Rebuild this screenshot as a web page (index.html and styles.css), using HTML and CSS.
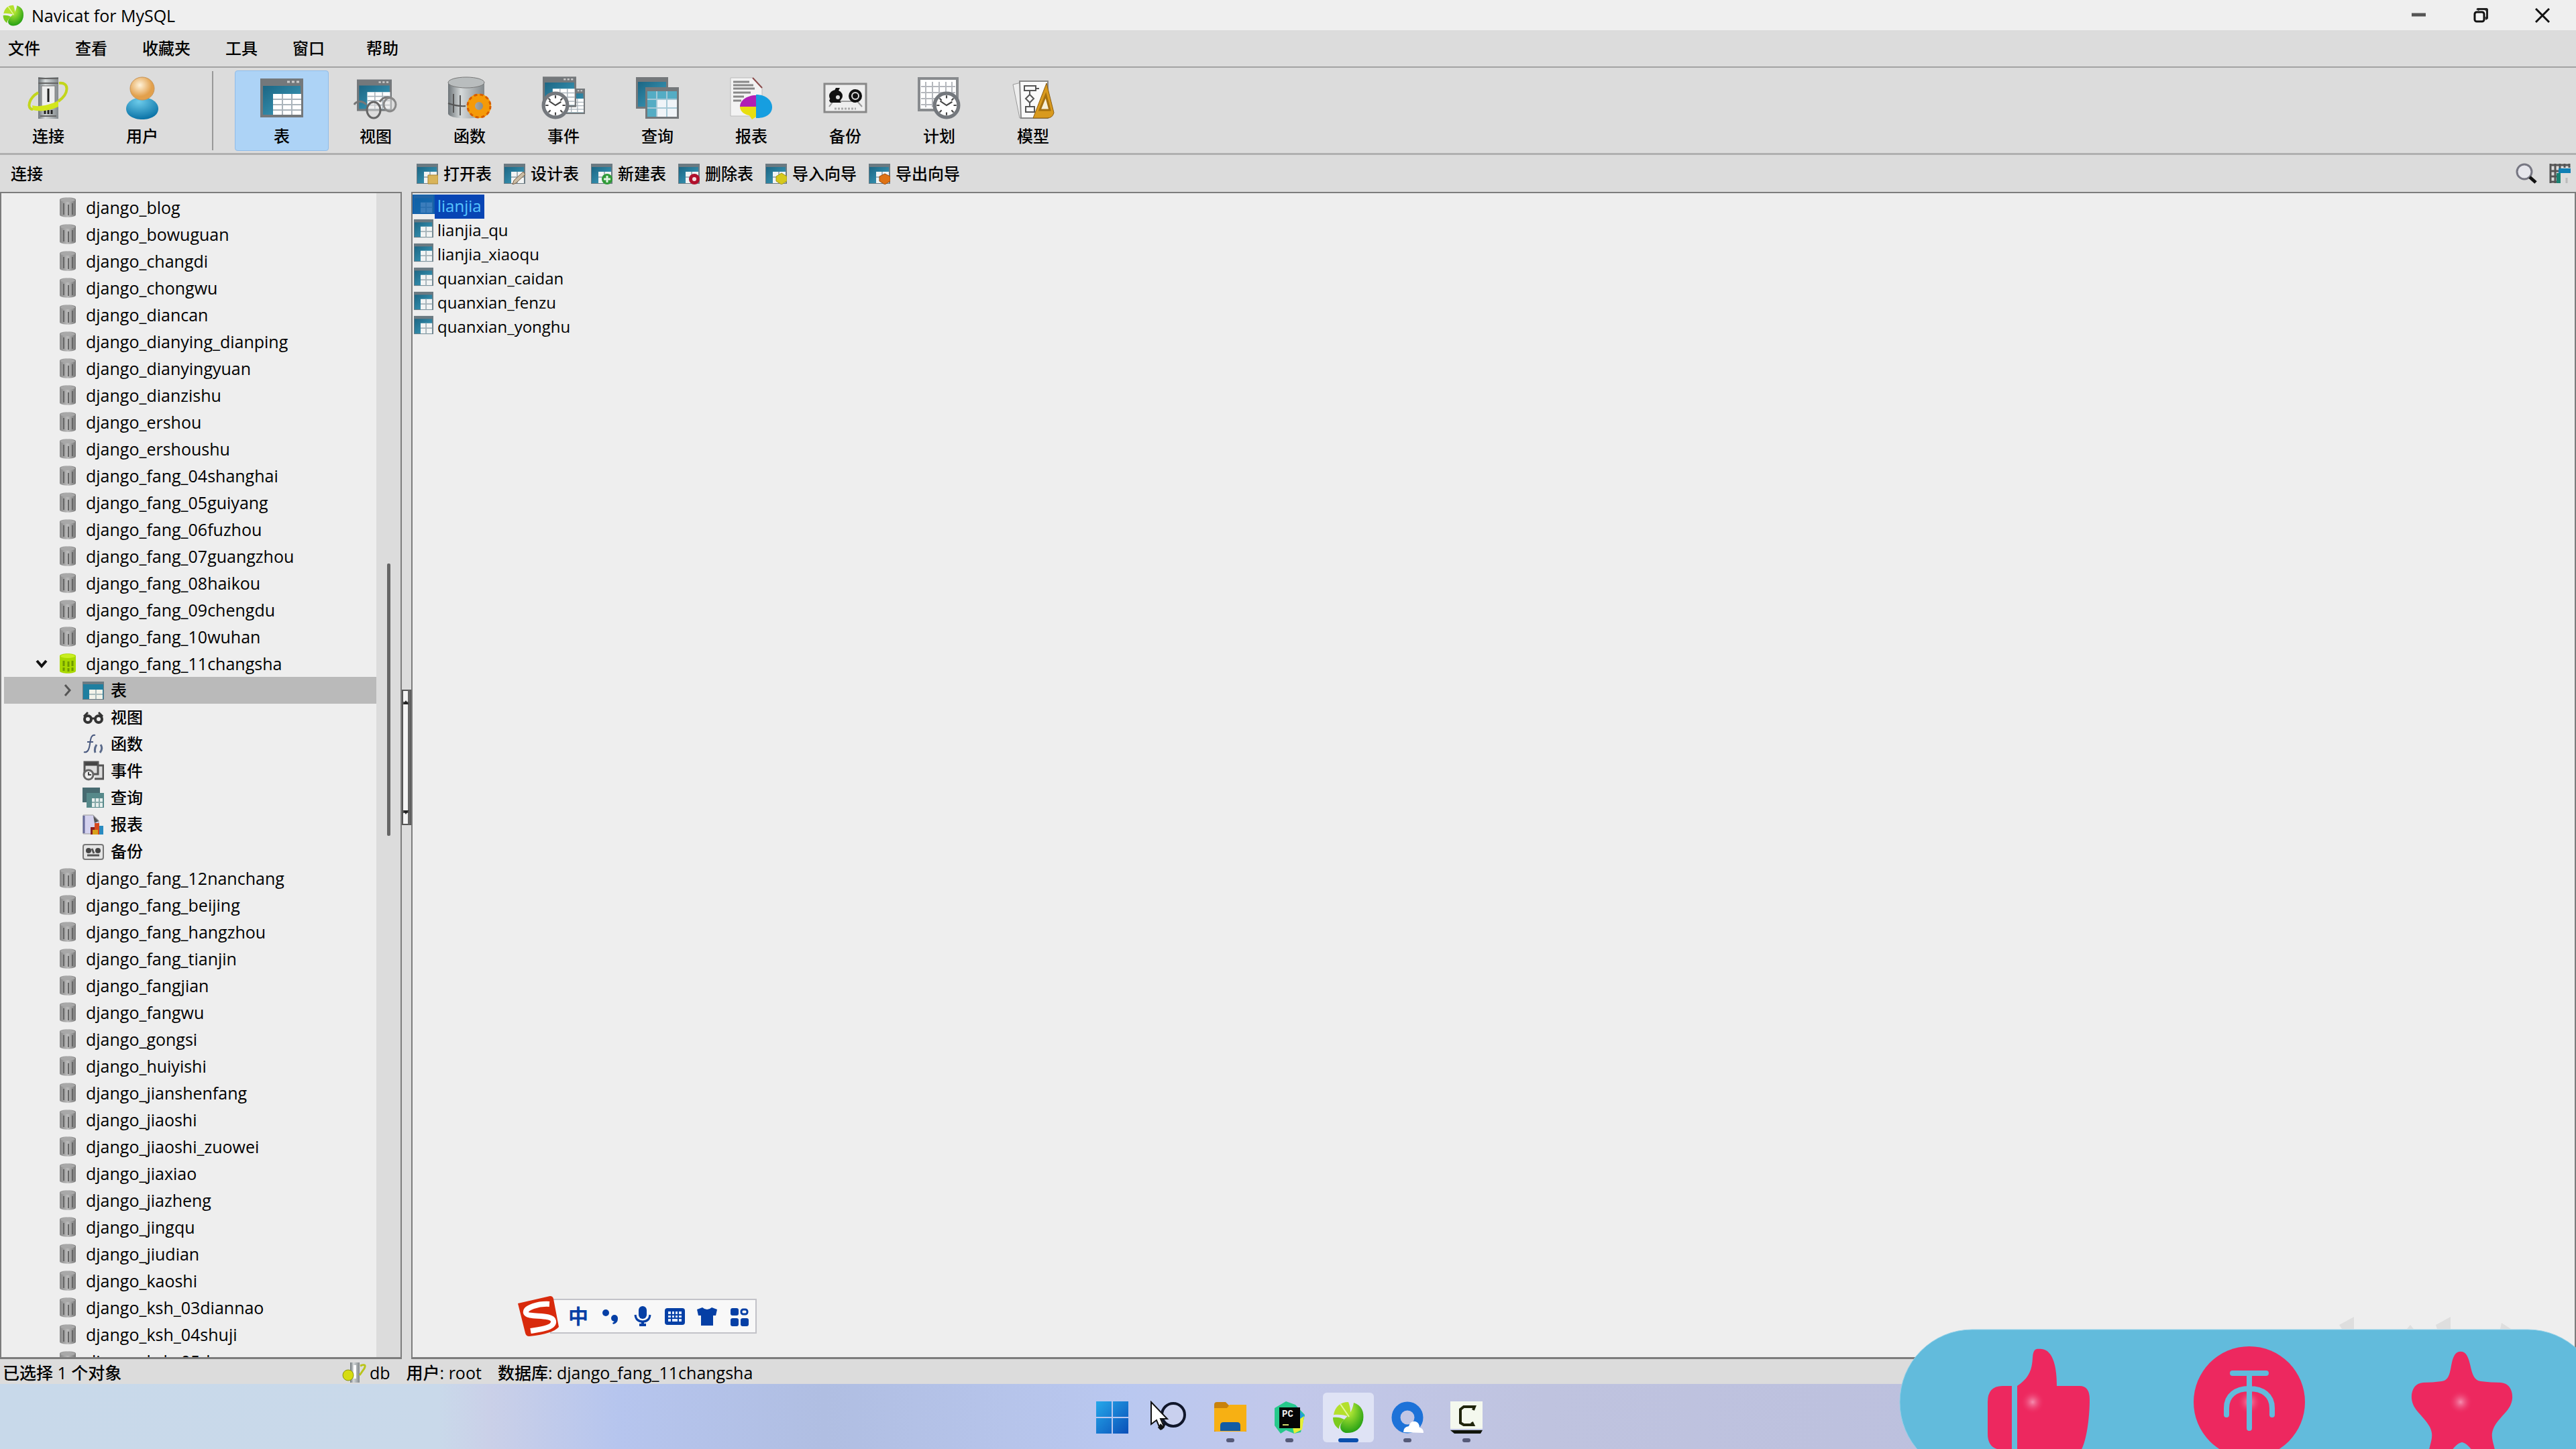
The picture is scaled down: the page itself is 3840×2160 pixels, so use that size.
FILE: index.html
```html
<!DOCTYPE html>
<html lang="zh-CN">
<head>
<meta charset="utf-8">
<title>Navicat for MySQL</title>
<link rel="stylesheet" href="styles.css">
</head>
<body>
<svg class="defs" aria-hidden="true">
  <defs>
    <linearGradient id="g-teal" x1="0" y1="0" x2="1" y2="1"><stop offset="0" stop-color="#1c6684"/><stop offset="1" stop-color="#3f9fbe"/></linearGradient>
    <linearGradient id="g-steel" x1="0" y1="0" x2="1" y2="0"><stop offset="0" stop-color="#6d7478"/><stop offset=".35" stop-color="#d5d9da"/><stop offset="1" stop-color="#83898c"/></linearGradient>
    <linearGradient id="g-gray" x1="0" y1="0" x2="1" y2="0"><stop offset="0" stop-color="#888"/><stop offset=".5" stop-color="#bbb"/><stop offset="1" stop-color="#777"/></linearGradient>
    <radialGradient id="g-skin" cx=".4" cy=".35"><stop offset="0" stop-color="#fff3da"/><stop offset="1" stop-color="#e2a04c"/></radialGradient>
    <radialGradient id="g-blue" cx=".4" cy=".2" r=".8"><stop offset="0" stop-color="#6ccbea"/><stop offset="1" stop-color="#0a72a6"/></radialGradient>
    <radialGradient id="g-green" cx=".35" cy=".25" r=".8"><stop offset="0" stop-color="#c8f23a"/><stop offset="1" stop-color="#1c9c12"/></radialGradient>
    <radialGradient id="g-shine"><stop offset="0" stop-color="#f48fb0"/><stop offset="1" stop-color="#ed285f" stop-opacity="0"/></radialGradient>
    <linearGradient id="g-win" x1="0" y1="0" x2="1" y2="1"><stop offset="0" stop-color="#25a8ea"/><stop offset="1" stop-color="#0a4fb8"/></linearGradient>
  </defs>
  <symbol id="i-leaf" viewBox="0 0 48 48"><path d="M2 20C4 8 12 1 24 1c3 8 4 14 2 22-8-3-16-4-24-3z" fill="#b4e02c"/><path d="M32 2c12 4 16 14 14 26-3 14-14 20-26 19-8-2-11-10-4-18 8-8 14-14 16-27z" fill="url(#g-green)"/><path d="M1 24c6-1 12 0 17 3-6 6-8 10-8 14-5-3-9-9-9-17z" fill="#7ccb1e"/><path d="M12 4l13 19" stroke="#e4f8a0" stroke-width="2"/></symbol>
  <symbol id="i-table" viewBox="0 0 64 64"><path fill="#74787b" d="M0 3h64v58H0z"/><path fill="url(#g-teal)" d="M4 14h56v43H4z"/><path fill="#fff" d="M19 26h42v31H19z"/><path d="M33 26v31M47 26v31M19 34h42M19 42h42M19 50h42" stroke="#aab4bb" stroke-width="2"/><path d="M40 8h4M47 8h4M54 8h4" stroke="#ccc" stroke-width="3"/></symbol>
  <symbol id="i-stable" viewBox="0 0 32 32"><path fill="#6b7a82" d="M0 1h32v30H0z"/><path fill="url(#g-teal)" d="M1 6h29v24H1z"/><path fill="#f2f4f4" d="M11 13h19v17H11z"/><path d="M20 13v17M11 21h19" stroke="#a4b2b8" stroke-width="2"/></symbol>
  <symbol id="i-db" viewBox="0 0 26 32"><path d="M1 5c0-5 24-5 24 0v22c0 5-24 5-24 0z" fill="url(#g-gray)"/><ellipse cx="13" cy="5" rx="11" ry="3" fill="#a8a8a8"/><path d="M7 10v17M14 12v16M20 10v17" stroke="#666" stroke-width="2"/></symbol>
  <symbol id="i-dbon" viewBox="0 0 26 32"><path d="M1 5c0-5 24-5 24 0v22c0 5-24 5-24 0z" fill="#a8d800"/><ellipse cx="13" cy="5" rx="11" ry="3" fill="#c9ee20"/><path d="M7 12v15M14 13v15M20 12v15" stroke="#6f9a00" stroke-width="3" stroke-dasharray="8 2"/></symbol>
  <symbol id="i-clock" viewBox="0 0 40 40"><circle cx="20" cy="20" r="17" fill="#fff" stroke="#74787d" stroke-width="5"/><path d="M20 6v4M20 30v4M6 20h4M30 20h4M10 10l3 3M30 10l-3 3M10 30l3-3M30 30l-3-3M11 14l9 6 8-5" fill="none" stroke="#444" stroke-width="2"/></symbol>
  <symbol id="i-chev" viewBox="0 0 24 24"><path d="M5 8l7 8 7-8" fill="none" stroke="#111" stroke-width="4"/></symbol>
</svg>

<header class="titlebar">
  <svg class="app-icon"><use href="#i-leaf"/></svg>
  <h1 class="app-title">Navicat for MySQL</h1>
  <button class="win-btn" aria-label="最小化"><svg viewBox="0 0 22 22"><path d="M0 10h21" stroke="#555" stroke-width="5"/></svg></button>
  <button class="win-btn" aria-label="还原"><svg viewBox="0 0 22 22"><rect x="2" y="6" width="14" height="14" rx="3" fill="#f4f4f4" stroke="#111" stroke-width="3"/><path d="M6 3q1-2 4-2h6q5 0 5 5v6q0 3-3 4" fill="none" stroke="#222" stroke-width="4"/></svg></button>
  <button class="win-btn" aria-label="关闭"><svg viewBox="0 0 22 22"><path d="M1 1l20 20M21 1L1 21" stroke="#111" stroke-width="3"/></svg></button>
</header>

<nav class="menubar">
  <button>文件</button><button>查看</button><button>收藏夹</button><button>工具</button><button>窗口</button><button class="menu-help">帮助</button>
</nav>

<div class="toolbar">
  <button class="tool"><svg viewBox="0 0 64 64"><path d="M17 1h30v62H17z" fill="url(#g-steel)"/><path d="M17 3h30M17 10h30M20 59h24" stroke="#666" stroke-width="2"/><path d="M22 14h20v32H22z" fill="#eee" stroke="#777"/><path d="M32 18v20M27 50v6M32 50v6M37 50v6" stroke="#222" stroke-width="3"/><path d="M48 10c16-2 15 16-1 27M17 24C3 32-1 48 9 49" fill="none" stroke="#c2d51c" stroke-width="4"/><path d="M8 43c8 3 26 0 39-7v9c-12 6-27 8-38 5z" fill="#d3e61c"/></svg><span>连接</span></button>
  <button class="tool"><svg viewBox="0 0 64 64"><path d="M8 48c0-9 10-17 24-17s24 8 24 17c0 10-11 16-24 16S8 58 8 48z" fill="url(#g-blue)"/><ellipse cx="32" cy="18" rx="18" ry="17" fill="url(#g-skin)" stroke="#c79457"/></svg><span>用户</span></button>
  <i class="sep"></i>
  <button class="tool tool-on"><svg><use href="#i-table"/></svg><span>表</span></button>
  <button class="tool"><svg viewBox="0 0 64 64"><use href="#i-table" x="4" y="2" width="52" height="52"/><path d="M18 42c-8-8-16-4-18 0M38 38c6-10 16-8 22-2" fill="none" stroke="#777" stroke-width="3"/><ellipse cx="29" cy="50" rx="10" ry="12" fill="#ddd" fill-opacity=".5" stroke="#666" stroke-width="3"/><ellipse cx="53" cy="42" rx="9" ry="10" fill="#ddd" fill-opacity=".5" stroke="#888" stroke-width="3"/></svg><span>视图</span></button>
  <button class="tool"><svg viewBox="0 0 64 64"><path d="M0 9v46c0 10 54 10 54 0V9z" fill="url(#g-steel)"/><ellipse cx="27" cy="9" rx="27" ry="8" fill="#b9bdbe" stroke="#777"/><path d="M8 26v28M18 28v30M0 40q14 5 26 4" fill="none" stroke="#555" stroke-width="2"/><circle cx="46" cy="44" r="12" fill="none" stroke="#f59a08" stroke-width="12"/><circle cx="46" cy="44" r="17" fill="none" stroke="#d55c00" stroke-width="3" stroke-dasharray="5 4"/></svg><span>函数</span></button>
  <button class="tool"><svg viewBox="0 0 64 64"><use href="#i-table" x="22" y="12" width="42" height="50"/><use href="#i-table" x="1" y="-2" width="50" height="50"/><use href="#i-clock" x="-1" y="22" width="42" height="42"/></svg><span>事件</span></button>
  <button class="tool"><svg viewBox="0 0 64 64"><path d="M0 1h48v47H0z" fill="#74787b"/><path d="M3 8h42v37H3z" fill="url(#g-teal)"/><path d="M14 16h50v47H14z" fill="#74787b"/><path d="M17 22h44v38H17z" fill="#54acc4"/><path d="M31 34h30v26H31z" fill="#f0f4f8"/><path d="M31 22v38M46 22v38M17 34h44M17 47h44" stroke="#a5c8d6" stroke-width="2"/></svg><span>查询</span></button>
  <button class="tool"><svg viewBox="0 0 64 64"><path d="M1 2h33l14 15v42H1z" fill="#f3f3f3" stroke="#bbb"/><path d="M34 2l14 15" stroke="#8a4a4a" stroke-width="2"/><path d="M5 8h24M5 13h30M5 18h32M5 24h26M5 30h16M5 36h12" stroke="#888" stroke-width="3"/><path d="M39 28v17H15c0-9 10-17 24-17z" fill="#b01fb5"/><path d="M39 62V27c30 0 34 36 0 35z" fill="#169ee0"/><path d="M39 45H15c0 8 8 12 14 13l4 6 6-4z" fill="#e8de10"/></svg><span>报表</span></button>
  <button class="tool"><svg viewBox="0 0 64 64"><path d="M1 11h62v42H1z" fill="#eee" stroke="#888" stroke-width="3"/><path d="M8 45l6-8h36l7 8" fill="none" stroke="#999" stroke-width="2"/><ellipse cx="18" cy="29" rx="10" ry="9" fill="#111"/><path d="M8 36l10-19h6l-6 12 8 10H10z" fill="#111"/><circle cx="47" cy="29" r="10" fill="#111"/><circle cx="47" cy="29" r="5" fill="none" stroke="#ddd" stroke-width="2"/><circle cx="21" cy="31" r="3" fill="#ddd"/><path d="M16 48h32" stroke="#aaa" stroke-width="3" stroke-dasharray="3 2"/></svg><span>备份</span></button>
  <button class="tool"><svg viewBox="0 0 64 64"><path d="M2 3h57v47H2z" fill="#fff" stroke="#888b8e" stroke-width="4"/><path d="M12 8v38M22 8v38M32 8v38M42 8v38M51 8v38M5 15h51M5 24h51M5 33h51M5 42h51" stroke="#b5b8bd" stroke-width="2"/><use href="#i-clock" x="22" y="22" width="42" height="42"/></svg><span>计划</span></button>
  <button class="tool"><svg viewBox="0 0 64 64"><path d="M2 12l16-4 6 52-12 2z" fill="#eee" stroke="#999"/><path d="M12 7h42v55H14z" fill="#fafafa" stroke="#888" stroke-width="2"/><path d="M19 14h17v7H19zM27 21v6M21 33l6-6 6 6-6 6zM27 39v6M21 45h13v8H21zM36 18h5" fill="none" stroke="#555" stroke-width="2"/><path d="M52 10l11 44q-2 8-10 8H32z" fill="#d99a1e" stroke="#8a5c12"/><path d="M51 28l6 22H42z" fill="#f7efd8" stroke="#a5700f" stroke-width="3"/></svg><span>模型</span></button>
</div>

<main class="workspace">
  <h2 class="pane-title">连接</h2>
  <div class="actions">
    <button class="action"><svg viewBox="0 0 32 32"><use href="#i-stable"/><path d="M17 18h15v13H17z" fill="#d9b45a" stroke="#a58332"/></svg>打开表</button>
    <button class="action"><svg viewBox="0 0 32 32"><use href="#i-stable"/><path d="M15 26l14-13 3 4-14 13-5 2z" fill="#c9bda6" stroke="#7a5c40"/></svg>设计表</button>
    <button class="action"><svg viewBox="0 0 32 32"><use href="#i-stable"/><circle cx="24" cy="24" r="8" fill="#2f9a38"/><path d="M24 19v10M19 24h10" stroke="#dff3df" stroke-width="3"/></svg>新建表</button>
    <button class="action"><svg viewBox="0 0 32 32"><use href="#i-stable"/><circle cx="24" cy="24" r="8" fill="#b0102c"/><circle cx="24" cy="24" r="3" fill="#f4dfe2"/></svg>删除表</button>
    <button class="action"><svg viewBox="0 0 32 32"><use href="#i-stable"/><path d="M16 20l8-5 8 5v7l-8 5-8-5z" fill="#d6c91c" stroke="#a0961a"/></svg>导入向导</button>
    <button class="action"><svg viewBox="0 0 32 32"><use href="#i-stable"/><path d="M16 20l8-4 8 4v7l-8 5-8-5z" fill="#de7214" stroke="#9c4a0a"/></svg>导出向导</button>
    <button class="tail tail-first" aria-label="搜索"><svg viewBox="0 0 32 32"><circle cx="13" cy="13" r="11" fill="#e6e6ec" stroke="#777783" stroke-width="3"/><path d="M21 21l9 8" stroke="#111" stroke-width="5"/></svg></button>
    <button class="tail" aria-label="视图方式"><svg viewBox="0 0 32 32"><path d="M2 1v29M9 1v29M16 1v10M23 1v6M30 1v6M1 3h30M1 12h14M1 20h14M1 28h14" stroke="#555" stroke-width="3"/><path d="M14 8h18v7H14z" fill="#0f7fb5"/><path d="M11 15h6v15h-6z" fill="#1a8272"/><path d="M26 22v8" stroke="#bbb" stroke-width="3"/></svg></button>
  </div>

  <aside class="tree-pane">
    <ul class="tree">
      <li class="node"><svg><use href="#i-db"/></svg>django_blog</li>
      <li class="node"><svg><use href="#i-db"/></svg>django_bowuguan</li>
      <li class="node"><svg><use href="#i-db"/></svg>django_changdi</li>
      <li class="node"><svg><use href="#i-db"/></svg>django_chongwu</li>
      <li class="node"><svg><use href="#i-db"/></svg>django_diancan</li>
      <li class="node"><svg><use href="#i-db"/></svg>django_dianying_dianping</li>
      <li class="node"><svg><use href="#i-db"/></svg>django_dianyingyuan</li>
      <li class="node"><svg><use href="#i-db"/></svg>django_dianzishu</li>
      <li class="node"><svg><use href="#i-db"/></svg>django_ershou</li>
      <li class="node"><svg><use href="#i-db"/></svg>django_ershoushu</li>
      <li class="node"><svg><use href="#i-db"/></svg>django_fang_04shanghai</li>
      <li class="node"><svg><use href="#i-db"/></svg>django_fang_05guiyang</li>
      <li class="node"><svg><use href="#i-db"/></svg>django_fang_06fuzhou</li>
      <li class="node"><svg><use href="#i-db"/></svg>django_fang_07guangzhou</li>
      <li class="node"><svg><use href="#i-db"/></svg>django_fang_08haikou</li>
      <li class="node"><svg><use href="#i-db"/></svg>django_fang_09chengdu</li>
      <li class="node"><svg><use href="#i-db"/></svg>django_fang_10wuhan</li>
      <li class="node node-open"><svg class="chev"><use href="#i-chev"/></svg><svg><use href="#i-dbon"/></svg>django_fang_11changsha</li>
      <li class="leaf leaf-on"><svg class="chev" viewBox="0 0 24 24"><path d="M8 4l7 8-7 8" fill="none" stroke="#555" stroke-width="3"/></svg><svg viewBox="0 0 32 32"><path d="M0 3h32v27H0z" fill="#6b7a82"/><path d="M1 7h30v22H1z" fill="#1f7fa0"/><path d="M10 15h20v14H10z" fill="#f3f3ea"/><path d="M20 15v14M10 22h20" stroke="#abb" stroke-width="2"/></svg>表</li>
      <li class="leaf"><svg viewBox="0 0 32 32"><circle cx="8" cy="19" r="5" fill="none" stroke="#333" stroke-width="4"/><circle cx="24" cy="19" r="5" fill="none" stroke="#333" stroke-width="4"/><path d="M2 15l6-6M30 15l-6-6M13 18h6" stroke="#333" stroke-width="3"/></svg>视图</li>
      <li class="leaf"><svg viewBox="0 0 32 32"><path d="M19 3c-6-2-7 6-8 13S8 30 2 28M7 13h9" fill="none" stroke="#4a5a80" stroke-width="2"/><path d="M21 17q-4 6-2 12M27 17q4 6-1 12" fill="none" stroke="#5a6a8a" stroke-width="3"/></svg>函数</li>
      <li class="leaf"><svg viewBox="0 0 32 32"><path d="M3 3h20v18H3zM23 8h8v20H18" fill="#ddd" stroke="#555" stroke-width="3"/><path d="M4 6h18" stroke="#444" stroke-width="5"/><circle cx="9" cy="22" r="7" fill="#eee" stroke="#666" stroke-width="3"/><path d="M9 18v4h4" fill="none" stroke="#444" stroke-width="2"/></svg>事件</li>
      <li class="leaf"><svg viewBox="0 0 32 32"><path d="M0 1h26v22H0z" fill="#476a70"/><path d="M6 9h26v22H6z" fill="#56898a"/><path d="M14 17h16v13H14z" fill="#e8f0ee"/><path d="M19 17v13M25 17v13M14 23h16" stroke="#8aa" stroke-width="2"/></svg>查询</li>
      <li class="leaf"><svg viewBox="0 0 32 32"><path d="M1 2h15l8 8v20H1z" fill="#d4d2ee" stroke="#999"/><path d="M2 3v26" stroke="#666a9a" stroke-width="3"/><path d="M16 3l8 8-6 3z" fill="#555"/><path d="M12 20h6v11h-6z" fill="#8a1f1f"/><path d="M18 14h7v17h-7z" fill="#d5481e"/><path d="M25 18h6v13h-6z" fill="#2a8bc0"/><path d="M15 24h8v7h-8z" fill="#d8a11a"/></svg>报表</li>
      <li class="leaf"><svg viewBox="0 0 32 32"><rect x="1" y="6" width="30" height="22" rx="3" fill="#e4e4e4" stroke="#777" stroke-width="2"/><circle cx="9" cy="15" r="4" fill="#444"/><circle cx="23" cy="15" r="4" fill="#444"/><path d="M7 22h18M14 12l3 7" stroke="#555" stroke-width="3"/></svg>备份</li>
      <li class="node"><svg><use href="#i-db"/></svg>django_fang_12nanchang</li>
      <li class="node"><svg><use href="#i-db"/></svg>django_fang_beijing</li>
      <li class="node"><svg><use href="#i-db"/></svg>django_fang_hangzhou</li>
      <li class="node"><svg><use href="#i-db"/></svg>django_fang_tianjin</li>
      <li class="node"><svg><use href="#i-db"/></svg>django_fangjian</li>
      <li class="node"><svg><use href="#i-db"/></svg>django_fangwu</li>
      <li class="node"><svg><use href="#i-db"/></svg>django_gongsi</li>
      <li class="node"><svg><use href="#i-db"/></svg>django_huiyishi</li>
      <li class="node"><svg><use href="#i-db"/></svg>django_jianshenfang</li>
      <li class="node"><svg><use href="#i-db"/></svg>django_jiaoshi</li>
      <li class="node"><svg><use href="#i-db"/></svg>django_jiaoshi_zuowei</li>
      <li class="node"><svg><use href="#i-db"/></svg>django_jiaxiao</li>
      <li class="node"><svg><use href="#i-db"/></svg>django_jiazheng</li>
      <li class="node"><svg><use href="#i-db"/></svg>django_jingqu</li>
      <li class="node"><svg><use href="#i-db"/></svg>django_jiudian</li>
      <li class="node"><svg><use href="#i-db"/></svg>django_kaoshi</li>
      <li class="node"><svg><use href="#i-db"/></svg>django_ksh_03diannao</li>
      <li class="node"><svg><use href="#i-db"/></svg>django_ksh_04shuji</li>
      <li class="node"><svg><use href="#i-db"/></svg>django_ksh_05dangao</li>
    </ul>
    <div class="scroll"><div class="thumb"></div></div>
  </aside>

  <div class="splitter"><svg class="grip" viewBox="0 0 14 202"><path d="M1 1h12v200H1z" fill="#f4f4f4" stroke="#555" stroke-width="2"/><path d="M11 1v200" stroke="#666" stroke-width="4"/><path d="M1 20h10M1 182h10" stroke="#555" stroke-width="4"/><path d="M2 22l4-6 4 6zM2 180l4 6 4-6z" fill="#222"/></svg></div>

  <section class="objects">
    <ul class="tables">
      <li class="table-on"><svg><use href="#i-stable"/></svg><span>lianjia</span></li>
      <li><svg><use href="#i-stable"/></svg><span>lianjia_qu</span></li>
      <li><svg><use href="#i-stable"/></svg><span>lianjia_xiaoqu</span></li>
      <li><svg><use href="#i-stable"/></svg><span>quanxian_caidan</span></li>
      <li><svg><use href="#i-stable"/></svg><span>quanxian_fenzu</span></li>
      <li><svg><use href="#i-stable"/></svg><span>quanxian_yonghu</span></li>
    </ul>
  </section>
</main>

<footer class="status">
  <span class="status-count">已选择 1 个对象</span>
  <span class="status-db"><svg viewBox="0 0 36 32"><path d="M12 1h14v30H12z" fill="url(#g-steel)"/><path d="M19 5v20" stroke="#fff" stroke-width="4"/><circle cx="9" cy="20" r="8" fill="#d6dc10" stroke="#8a9410"/><path d="M27 6q10-4 6 4l-7 10" fill="none" stroke="#b9c41a" stroke-width="3"/></svg>db</span>
  <span>用户: root</span>
  <span>数据库: django_fang_11changsha</span>
</footer>

<nav class="taskbar">
  <button class="task" aria-label="开始"><svg viewBox="0 0 48 48"><path d="M0 0h23v23H0zM25 0h23v23H25zM0 25h23v23H0zM25 25h23v23H25z" fill="url(#g-win)"/></svg></button>
  <button class="task" aria-label="搜索"><svg viewBox="0 0 48 48"><circle cx="27" cy="20" r="17" fill="#c9d0ee" stroke="#10162a" stroke-width="4"/><path d="M14 33l-6 8" stroke="#10162a" stroke-width="5"/></svg></button>
  <button class="task task-run" aria-label="文件资源管理器"><svg viewBox="0 0 48 48"><path d="M0 5q0-4 4-4h13l5 5h26v39H0z" fill="#c9820c"/><path d="M0 10h19l4-5h25v39q0 1-3 1H3q-3 0-3-3z" fill="#f7b013"/><path d="M9 44V36q0-5 5-5h20q5 0 5 5v8z" fill="#125ba5"/></svg></button>
  <button class="task task-run" aria-label="PyCharm"><svg viewBox="0 0 48 48"><path d="M2 10L19 0l14 5 14 15-6 26-10 2-12-5-8 5-9-12z" fill="#26c98b"/><path d="M32 6l15 16-9 6z" fill="#1f9fd8"/><path d="M28 34l18-12-3 20-12 6z" fill="#e6ef38"/><path d="M9 9h31v31H9z" fill="#050505"/><path d="M14 35h9" stroke="#ccd86a" stroke-width="2"/><text x="13" y="23" class="pc">PC</text></svg></button>
  <button class="task task-run task-on" aria-label="Navicat"><svg><use href="#i-leaf"/></svg></button>
  <button class="task task-run" aria-label="QQ浏览器"><svg viewBox="0 0 48 48"><circle cx="24" cy="24" r="17" fill="none" stroke="#1d72d8" stroke-width="13"/><path d="M18 46q0-8 8-9 3-9 10-7 6 2 6 9 6 1 6 8z" fill="#fff"/></svg></button>
  <button class="task task-run" aria-label="Camtasia"><svg viewBox="0 0 48 48"><path d="M0 0h48v41H0z" fill="#f4f8ee"/><path d="M34 13l2-5H20l-5 4v20l5 3h14l-2-4" fill="none" stroke="#20240c" stroke-width="4"/><path d="M0 43h48l-3 5H6z" fill="#10140a"/></svg></button>
</nav>

<svg class="cursor" viewBox="0 0 28 46" aria-hidden="true"><path d="M2 2v33l8-6 5 12 6-3-5-11h10z" fill="#fff" stroke="#111" stroke-width="2"/><path d="M12 40l4-6 6 6-6 4z" fill="#111"/></svg>

<div class="ime">
  <svg class="ime-logo" viewBox="0 0 64 62"><path d="M2 12L50 1q4 0 5 4l8 42q-8 10-44 14-5 0-6-5z" fill="#d82a0c"/><path d="M49 13C33 12 12 18 14 26s39 1 41 12-22 13-34 15" fill="none" stroke="#fff" stroke-width="8"/></svg>
  <div class="ime-bar">
    <button>中</button>
    <button aria-label="标点"><svg viewBox="0 0 32 32"><circle cx="9" cy="11" r="5"/><circle cx="22" cy="19" r="5"/><path d="M27 19q0 8-7 9l-1-2q4-2 4-5z"/></svg></button>
    <button aria-label="语音"><svg viewBox="0 0 32 32"><rect x="10" y="1" width="12" height="19" rx="6"/><path d="M5 14q1 10 11 10t11-10" fill="none" stroke="#053fa5" stroke-width="3"/><path d="M14 24h4v3h3v4H11v-4h3z"/></svg></button>
    <button aria-label="键盘"><svg viewBox="0 0 32 32"><rect x="1" y="4" width="30" height="25" rx="4"/><path d="M6 9h20v15H6z" fill="#dfeaff"/><path d="M11 9v15M16 9v11M21 9v15M6 14h20M6 19h20" stroke="#053fa5" stroke-width="2"/></svg></button>
    <button aria-label="皮肤"><svg viewBox="0 0 32 32"><path d="M9 3q7 6 14 0l8 3-2 9h-4v15H7V15H3L1 6z"/></svg></button>
    <button aria-label="工具箱"><svg viewBox="0 0 32 32"><rect x="3" y="4" width="12" height="11" rx="3"/><rect x="19" y="6" width="9" height="7" rx="3" fill="none" stroke="#053fa5" stroke-width="3"/><rect x="3" y="19" width="12" height="12" rx="3"/><rect x="18" y="19" width="12" height="12" rx="3"/></svg></button>
  </div>
</div>

<div class="badge">
  <svg viewBox="0 0 1046 218" aria-hidden="true">
    <rect x="1" y="1" width="1044" height="216" rx="108" fill="#62bbdc" stroke="#8fd0e8"/>
    <g fill="#ed285f">
      <path d="M132 109q0-24 22-24h14v95h-14q-22 0-22-24zM176 85c18-12 22-24 23-42 1-16 7-13 14-13 13 2 22 18 22 55h34q15 0 15 20c0 32-6 66-13 76q-6 14-24 14h-71z"/>
      <circle cx="522" cy="109" r="83"/>
      <path d="M828 39c4-7 14-7 18 0 8 13 5 37 21 39 9 1 20 2 30 2 12 1 18 11 17 24-2 18-17 24-27 42-7 14-1 22 2 39 2 18-10 22-22 12-8-6-16-26-28-28-12 2-20 22-28 28-12 10-24 6-22-12 3-17 9-25 2-39-10-18-25-24-27-42-1-13 5-23 17-24 10 0 19-1 28-2 16-2 11-26 19-39z"/>
    </g>
    <g fill="url(#g-shine)"><circle cx="199" cy="109" r="18"/><circle cx="522" cy="109" r="18"/><circle cx="837" cy="109" r="18"/></g>
    <path d="M497 66h50M522 66v82M488 128v-10c0-19 14-29 34-29s34 10 34 29v10" fill="none" stroke="#62bbdc" stroke-width="8" stroke-linecap="round"/>
  </svg>
</div>
<svg class="watermark" viewBox="0 0 260 18" aria-hidden="true"><path d="M0 12L22 0v18H4zM101 18l5-6 5 6zM144 12l22-12v18h-20zM240 18l2-9 14 9z" fill="#dedede"/></svg>
</body>
</html>
```
FILE: styles.css
```css
* { box-sizing: border-box; margin: 0; padding: 0; }
html, body { height: 100%; }
body {
  position: relative;
  display: flex;
  flex-direction: column;
  overflow: hidden;
  background: #dcdcdc;
  color: #000;
  font: 500 24px/30px "Open Sans", "Noto Sans CJK SC", sans-serif;
}
button { border: 0; background: none; color: inherit; font: inherit; }
svg { display: block; flex: none; }
ul { list-style: none; }
.defs { position: absolute; width: 0; height: 0; }

.titlebar { display: flex; align-items: center; height: 45px; padding-left: 4px; background: #efefef; }
.app-icon { width: 32px; height: 32px; }
.app-title { flex: 1; margin-left: 11px; font-size: 25px; font-weight: 500; }
.win-btn { display: grid; place-items: center; width: 92px; height: 40px; }
.win-btn svg { width: 22px; height: 22px; }
.win-btn:last-child { margin-right: 4px; }

.menubar { display: flex; align-items: center; gap: 52px; height: 56px; padding-left: 12px; border-bottom: 2px solid #a3a3a3; }
.menu-help { margin-left: 10px; }

.toolbar { display: flex; align-items: center; height: 130px; padding-left: 2px; border-bottom: 3px solid #b0b0b0; }
.tool { display: flex; flex-direction: column; align-items: center; gap: 10px; width: 140px; height: 120px; padding-top: 8px; border: 1px solid transparent; border-radius: 4px; }
.tool svg { width: 64px; height: 64px; overflow: visible; }
.tool-on { border-color: #90bce8; background: #add3f6; }
.sep { width: 2px; height: 118px; margin: 0 32px 0 34px; background: #999; }

.workspace { flex: 1; display: grid; grid-template: 55px minmax(0, 1fr) / 599px 14px minmax(0, 1fr); min-height: 0; }
.pane-title { grid-column: 1 / 3; align-self: center; padding-left: 16px; font-size: 24px; font-weight: 500; }
.actions { display: flex; align-items: center; gap: 18px; padding: 0 8px; }
.action { display: flex; align-items: center; gap: 8px; }
.action svg, .tail svg { width: 32px; height: 32px; }
.tail-first { margin-left: auto; }

.tree-pane { display: flex; overflow: hidden; border: 2px solid #7c7c7c; border-bottom-width: 3px; background: #eee; }
.tree { flex: 1; padding: 1px 0 0 4px; font-size: 25px; }
.node, .leaf { display: flex; align-items: center; height: 40px; white-space: nowrap; }
.node { gap: 14px; padding-left: 82px; }
.node svg { width: 26px; height: 32px; }
.node .chev, .leaf .chev { width: 24px; height: 24px; }
.node-open { padding-left: 44px; }
.leaf { gap: 10px; padding-left: 117px; font-size: 24px; }
.leaf svg { width: 32px; height: 32px; }
.leaf-on { padding-left: 83px; background: #bababa; }
.scroll { width: 36px; padding: 552px 0 0 16px; background: #dcdcdc; }
.thumb { width: 5px; height: 406px; border-radius: 2px; background: #666; }
.splitter { display: flex; align-items: flex-start; padding-top: 742px; }
.grip { width: 14px; height: 202px; }
.objects { border: 2px solid #7c7c7c; border-bottom-width: 3px; background: #eee; }
.tables { padding-top: 2px; }
.tables li { display: flex; align-items: flex-start; height: 36px; }
.tables svg { width: 33px; height: 29px; }
.tables span { padding: 0 4px 2px; line-height: 34px; }
.table-on span { background: #0845b4; color: #58c6ff; }
.table-on svg { background: #0d5fae; }
.table-on use { opacity: 0.2; }

.status { display: flex; align-items: center; gap: 24px; height: 37px; padding: 2px 0 0 4px; font-size: 25px; white-space: nowrap; }
.status-count { width: 482px; }
.status-db { display: flex; align-items: center; gap: 5px; }
.status-db svg { width: 36px; height: 32px; }

.taskbar {
  display: flex;
  justify-content: center;
  gap: 12px;
  height: 97px;
  padding: 13px 0 0 4px;
  background: linear-gradient(90deg, #c8d9ea 0, #c9d9ea 17%, #cad0e8 19%, #b6c5ee 24%, #b0bee2 32%, #bac8f0 44%, #c2c8ea 50%, #bfc3df 60%, #b8bcdc 100%);
}
.task { display: flex; flex-direction: column; align-items: center; width: 76px; height: 74px; padding-top: 13px; border-radius: 6px; }
.task svg { width: 48px; height: 48px; }
.task-run::after { content: ""; width: 12px; height: 6px; margin-top: 7px; border-radius: 3px; background: #555a78; }
.task-on { background: #dfe3f5; }
.task-on::after { width: 30px; background: #0a4fae; }
.pc { font: 700 14px "Liberation Mono", monospace; fill: #eee; }
.cursor { position: absolute; left: 1714px; bottom: 26px; width: 28px; height: 46px; }

.ime { position: absolute; left: 770px; bottom: 167px; display: flex; align-items: center; }
.ime-logo { position: relative; z-index: 1; width: 64px; height: 62px; }
.ime-bar { display: flex; align-items: center; gap: 16px; height: 52px; margin-left: -14px; padding: 0 8px 0 24px; border: 2px solid #c2c2c8; background: #f8f8f8; color: #053fa5; }
.ime-bar button { width: 32px; height: 32px; font-size: 30px; font-weight: 700; line-height: 32px; }
.ime-bar svg { width: 32px; height: 32px; fill: #053fa5; }

.badge { position: absolute; right: -37px; bottom: -39px; width: 1046px; }
.watermark { position: absolute; right: 93px; bottom: 179px; width: 260px; height: 18px; }
```
